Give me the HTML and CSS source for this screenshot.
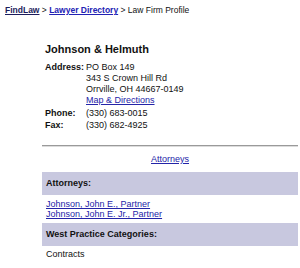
FILE: index.html
```html
<!DOCTYPE html>
<html lang="en">
<head>
    <meta charset="UTF-8">
    <title>Law Firm Profile</title>
    <link rel="stylesheet" href="styles.css">
</head>
<body>

    <div class="crumbs">
        <a href="#" class="home">FindLaw</a> &gt; <a href="#" class="dir">Lawyer Directory</a> &gt; Law Firm Profile
    </div>

    <div class="firm">
        <h1>Johnson &amp; Helmuth</h1>

        <table class="info">
            <tr>
                <th>Address:</th>
                <td>PO Box 149<br>343 S Crown Hill Rd<br>Orrville, OH 44667-0149<br><a href="#">Map &amp; Directions</a></td>
            </tr>
            <tr class="phone">
                <th>Phone:</th>
                <td>(330) 683-0015</td>
            </tr>
            <tr class="fax">
                <th>Fax:</th>
                <td>(330) 682-4925</td>
            </tr>
        </table>

        <div class="rule"></div>

        <div class="tabs"><a href="#">Attorneys</a></div>

        <div class="band">Attorneys:</div>
        <div class="list">
            <a href="#">Johnson, John E., Partner</a><br>
            <a href="#">Johnson, John E. Jr., Partner</a>
        </div>

        <div class="band">West Practice Categories:</div>
        <div class="list plain">Contracts</div>
    </div>

</body>
</html>
```

FILE: styles.css
```css
body {
    margin: 0;
    font-family: "Liberation Sans", Arial, sans-serif;
    font-size: 9px;
    color: #111;
    background: #fff;
}
a {
    color: #2424a8;
}
.crumbs {
    padding: 4px 5px;
    font-size: 8.5px;
    line-height: 12px;
}
.crumbs .home {
    color: #1c1c5c;
    font-weight: bold;
}
.crumbs .dir {
    color: #2222b4;
    font-weight: bold;
}
.firm {
    margin: 22px 2px 0 42px;
}
h1 {
    margin: 0 0 6px 3px;
    font-size: 11px;
    line-height: 14px;
}
.info {
    border-collapse: collapse;
    margin-left: 3px;
}
.info th {
    text-align: left;
    vertical-align: top;
    padding: 0;
    width: 41px;
    line-height: 11px;
}
.info td {
    padding: 0;
    line-height: 11px;
}
.info .phone th,
.info .phone td {
    padding-top: 2px;
}
.info .fax th,
.info .fax td {
    padding-top: 1px;
}
.rule {
    margin-top: 14px;
    border-top: 1px solid #9a9a9a;
    border-bottom: 1px solid #dcdcdc;
}
.tabs {
    text-align: center;
    padding: 6px 0 7px;
    line-height: 12px;
}
.band {
    background: #c8c8df;
    font-weight: bold;
    padding: 6px 4px;
    line-height: 11px;
}
.list {
    padding: 4px 4px;
    line-height: 10px;
}
.list.plain {
    padding-top: 3px;
}
```
